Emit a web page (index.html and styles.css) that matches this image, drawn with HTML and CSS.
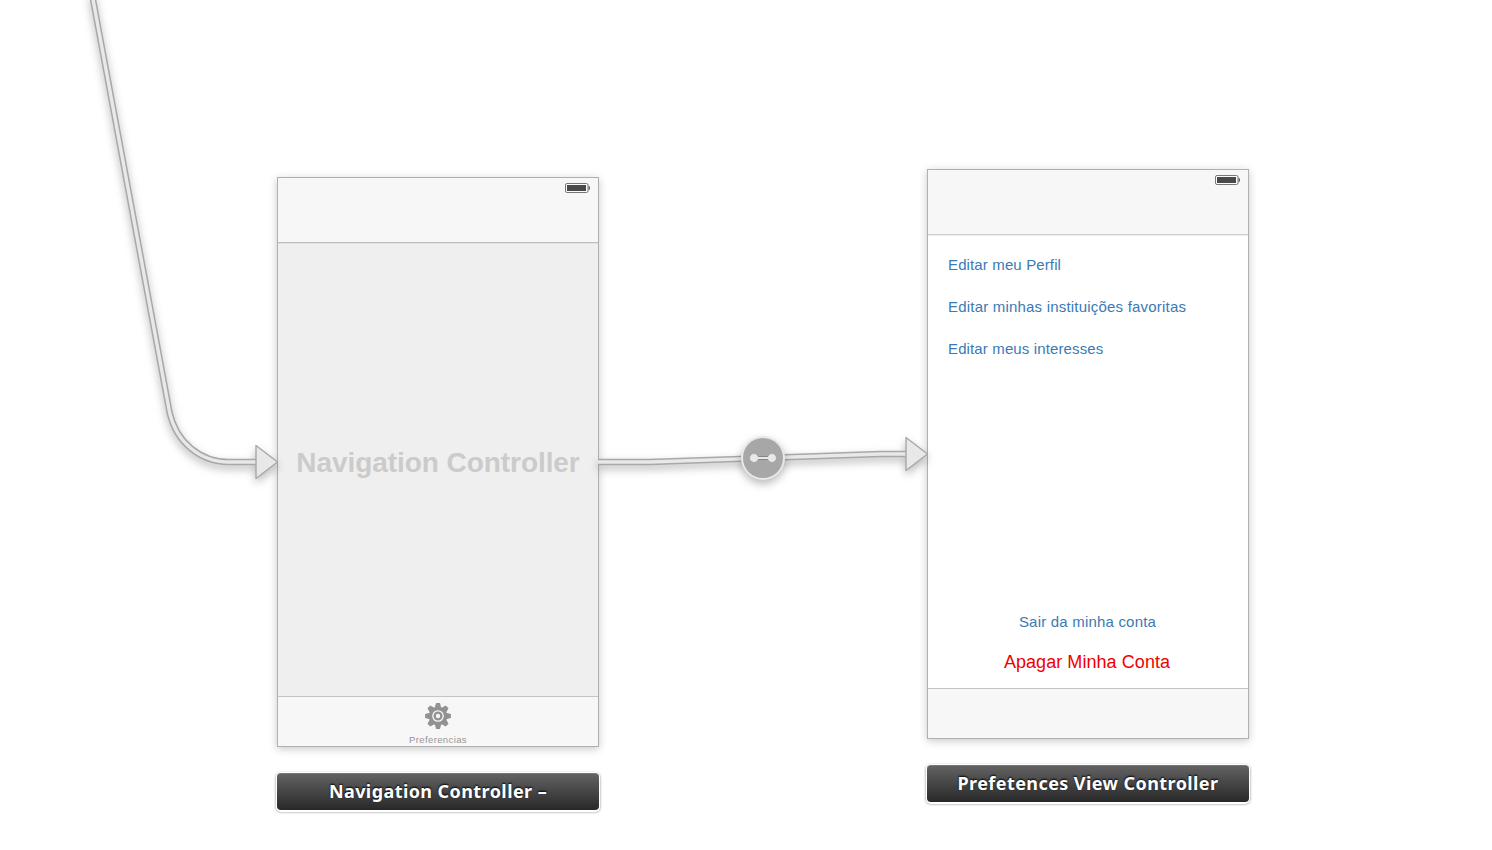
FILE: index.html
```html
<!DOCTYPE html>
<html lang="pt">
<head>
<meta charset="utf-8">
<title>Storyboard</title>
<link rel="stylesheet" href="styles.css">
</head>
<body>
<main class="canvas">
  <section class="scene scene-nav">
    <div class="device">
      <header class="navbar">
        <svg class="battery" width="26" height="11" viewBox="0 0 26 11"><rect x=".5" y=".5" width="22.500" height="9" rx="1.500" fill="#fafafa" stroke="#777"/><rect x="2" y="2" width="19" height="6" fill="#4a4a48"/><path d="M23.700 2.800q1.300.2 1.300 2.200t-1.300 2.200z" fill="#555"/></svg>
      </header>
      <div class="content content-empty"><span class="placeholder">Navigation Controller</span></div>
      <footer class="tabbar">
        <svg class="gear" width="28" height="28" viewBox="-14 -14 28 28">
          <g fill="#929292">
            <g id="teeth"><path id="tooth" d="M-3.300-8 L-2-12.900H2L3.300-8V8L2 12.900H-2L-3.300 8z"/><use href="#tooth" transform="rotate(90)"/></g>
            <use href="#teeth" transform="rotate(45)"/>
            <circle r="9.200"/>
          </g>
          <circle r="5.200" fill="none" stroke="#f7f7f7" stroke-width="1.300"/>
          <circle r="2.200" fill="#f7f7f7"/>
        </svg>
        <span class="tab-title">Preferencias</span>
      </footer>
    </div>
    <div class="plate"><span class="plate-nav">Navigation Controller –</span></div>
  </section>

  <section class="scene scene-prefs">
    <div class="device">
      <header class="navbar">
        <svg class="battery" width="26" height="11" viewBox="0 0 26 11"><rect x=".5" y=".5" width="22.500" height="9" rx="1.500" fill="#fafafa" stroke="#777"/><rect x="2" y="2" width="19" height="6" fill="#4a4a48"/><path d="M23.700 2.800q1.300.2 1.300 2.200t-1.300 2.200z" fill="#555"/></svg>
      </header>
      <div class="content content-prefs">
        <nav class="links">
          <a class="link link-profile">Editar meu Perfil</a>
          <a class="link link-favorites">Editar minhas instituições favoritas</a>
          <a class="link link-interests">Editar meus interesses</a>
        </nav>
        <div class="account">
          <a class="link link-logout">Sair da minha conta</a>
          <a class="danger">Apagar Minha Conta</a>
        </div>
      </div>
      <footer class="tabbar"></footer>
    </div>
    <div class="plate"><span class="plate-prefs">Prefetences View Controller</span></div>
  </section>

  <svg class="segues" width="1492" height="850" viewBox="0 0 1492 850" fill="none">
    <g class="segue">
      <path class="edge" d="M92-6L169.500 412C176 442 200 462 229 462H257"/>
      <path class="core" d="M92-6L169.500 412C176 442 200 462 229 462H257"/>
      <path class="head" d="M256 445.500V478.500L277.500 462z"/>
    </g>
    <g class="segue">
      <path class="edge" d="M598 462H650L880 454H907"/>
      <path class="core" d="M598 462H650L880 454H907"/>
      <path class="head" d="M906 437.500V470.500L927.500 454z"/>
    </g>
    <g class="segue">
      <circle cx="763" cy="458" r="22" fill="#e8e8e8"/>
      <circle cx="763" cy="458" r="20" fill="#a7a7a7"/>
    </g>
    <path d="M754 458H772" stroke="#858585" stroke-width="4"/>
    <circle cx="754" cy="458" r="4.400" fill="#e8e8e8" stroke="#959595" stroke-width=".5"/>
    <circle cx="772" cy="458" r="4.400" fill="#e8e8e8" stroke="#959595" stroke-width=".5"/>
    <path d="M754 458H772" stroke="#e8e8e8" stroke-width="2"/>
  </svg>
</main>
</body>
</html>
```
FILE: styles.css
```css
* { box-sizing: border-box; }
body { margin: 0; background: #fff; font-family: "Liberation Sans", Arial, sans-serif; }
.canvas { position: relative; width: 1492px; height: 850px; overflow: hidden; }

.scene { position: absolute; width: 322px; display: flex; flex-direction: column; gap: 26px; }
.scene-nav { left: 277px; top: 177px; }
.scene-prefs { left: 927px; top: 169px; }

.device { height: 570px; display: flex; flex-direction: column; border: 1px solid #b0b0b0; background: #fff; box-shadow: 0 2px 8px rgba(0, 0, 0, .22); }
.navbar { height: 65px; display: flex; justify-content: flex-end; padding: 5px 7px 0 0; background: #f7f7f7; border-bottom: 1px solid #bcbcbc; }
.scene-prefs .navbar { border-bottom-color: #cfcfcf; }
.content { flex: 1; display: flex; }
.content-empty { align-items: center; justify-content: center; padding-bottom: 15px; background: #efefef; border-top: 1px solid #e2e2e2; }
.placeholder { font-size: 28px; font-weight: bold; letter-spacing: -.06px; color: #cbcbcb; white-space: nowrap; }
.tabbar { height: 50px; display: flex; flex-direction: column; align-items: center; padding-top: 5px; background: #f7f7f7; border-top: 1px solid #c4c4c4; }
.tab-title { margin-top: 4px; font-size: 9.5px; line-height: 12px; letter-spacing: .38px; color: #969696; }

.content-prefs { flex-direction: column; justify-content: space-between; padding: 18px 20px 15px; border-top: 1px solid #ededed; }
.links { display: flex; flex-direction: column; align-items: flex-start; gap: 20px; }
.link { font-size: 15px; line-height: 22px; letter-spacing: .13px; color: #3a7ab5; white-space: nowrap; }
.link-favorites { letter-spacing: .2px; }
.link-logout { letter-spacing: .2px; margin-right: 1px; }
.account { display: flex; flex-direction: column; align-items: center; gap: 18px; }
.danger { margin-right: 2px; font-size: 18px; line-height: 22px; letter-spacing: .06px; color: #f00000; white-space: nowrap; }

.plate { height: 37px; display: flex; align-items: center; justify-content: center; padding-bottom: 3px; border-radius: 4px; border-top: 1px solid #777; background: linear-gradient(#626262, #282828); box-shadow: 0 0 0 1px #fff, 0 1px 0 1px #fff, 0 1px 2px 2px rgba(0, 0, 0, .22); font-family: "Noto Sans", sans-serif; font-size: 18px; font-weight: 700; letter-spacing: .42px; color: #fff; text-shadow: 0 -1px 2px #000; white-space: nowrap; }

.segues { position: absolute; inset: 0; pointer-events: none; }
.segue { filter: drop-shadow(0 4px 4px rgba(0, 0, 0, .27)); }
.edge { stroke: #a8a8a8; stroke-width: 6.4; }
.core { stroke: #e8e8e8; stroke-width: 3.4; }
.head { fill: #e8e8e8; stroke: #a8a8a8; stroke-width: 1.4; stroke-linejoin: round; }
```
